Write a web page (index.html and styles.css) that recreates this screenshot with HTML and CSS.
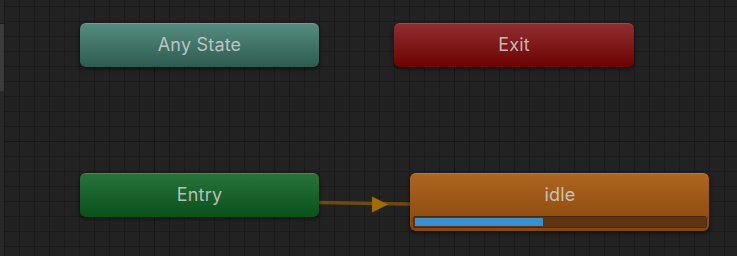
FILE: index.html
```html
<!DOCTYPE html>
<html>
<head>
<meta charset="utf-8">
<link rel="stylesheet" href="styles.css">
</head>
<body>
<div class="canvas">
  <div class="scroll"><div class="thumb"></div></div>
  <svg class="links" width="737" height="256" viewBox="0 0 737 256">
    <line x1="318" y1="202.5" x2="410" y2="204" stroke="#6d4b10" stroke-width="3.5"/>
    <polygon points="372,196.5 388,204.5 372,212.5" fill="#a06d02"/>
  </svg>
  <div class="node any">Any State</div>
  <div class="node exit">Exit</div>
  <div class="node entry">Entry</div>
  <div class="node state idle">
    <div class="label">idle</div>
    <div class="bar"><div class="fill" style="width:44%"></div></div>
  </div>
</div>
</body>
</html>
```

FILE: styles.css
```css
html, body {
  margin: 0;
  padding: 0;
  background: #202020;
}
.canvas {
  position: relative;
  width: 737px;
  height: 256px;
  overflow: hidden;
  background-color: #222222;
  background-image:
    linear-gradient(to right, #161616 0, #161616 1px, transparent 1px),
    linear-gradient(to bottom, #161616 0, #161616 1px, transparent 1px),
    linear-gradient(to right, #1b1b1b 0, #1b1b1b 1px, transparent 1px),
    linear-gradient(to bottom, #1b1b1b 0, #1b1b1b 1px, transparent 1px);
  background-size: 300px 300px, 300px 300px, 15px 15px, 15px 15px;
  background-position: 154px 0, 0 141px, 4px 0, 0 6px;
  font-family: Inter, "Noto Sans", sans-serif;
}
.scroll {
  position: absolute;
  left: 0;
  top: 0;
  width: 4px;
  height: 256px;
  background: #282828;
  border-right: 1px solid #1a1a1a;
}
.thumb {
  margin-top: 23px;
  height: 67px;
  background: #3c3c3c;
  border-top: 1px solid #1a1a1a;
}
.links {
  position: absolute;
  left: 0;
  top: 0;
}
.node {
  position: absolute;
  box-sizing: border-box;
  display: flex;
  align-items: center;
  justify-content: center;
  height: 44px;
  width: 239px;
  padding-bottom: 3px;
  border-radius: 6px;
  color: rgba(212, 212, 212, 0.85);
  font-size: 18px;
  letter-spacing: 0.2px;
  box-shadow: 0 2px 4px rgba(0, 0, 0, 0.55);
}
.any {
  left: 80px;
  top: 23px;
  background: linear-gradient(to bottom, #548c7e, #2e5b50);
  border-top: 1px solid #6f9f93;
}
.exit {
  left: 394px;
  top: 23px;
  width: 240px;
  background: linear-gradient(to bottom, #8e2e30, #6d0202);
  border-top: 1px solid #a24648;
}
.entry {
  left: 80px;
  top: 173px;
  background: linear-gradient(to bottom, #28723c, #08511b);
  border-top: 1px solid #458a55;
}
.state {
  left: 410px;
  top: 173px;
  width: 299px;
  height: 58px;
  flex-direction: column;
  align-items: stretch;
  justify-content: flex-start;
  padding: 0 2px 3px 3px;
}
.idle {
  background: linear-gradient(to bottom, #ad6520, #86470d);
  border-top: 1px solid #c07a38;
}
.label {
  height: 42px;
  padding-bottom: 2px;
  box-sizing: border-box;
  display: flex;
  align-items: center;
  justify-content: center;
}
.bar {
  height: 12px;
  box-sizing: border-box;
  background: #5e3510;
  border: 1px solid #4a280a;
  border-radius: 2px;
  padding: 1px;
}
.fill {
  height: 100%;
  background: #3a8fd3;
}
```
